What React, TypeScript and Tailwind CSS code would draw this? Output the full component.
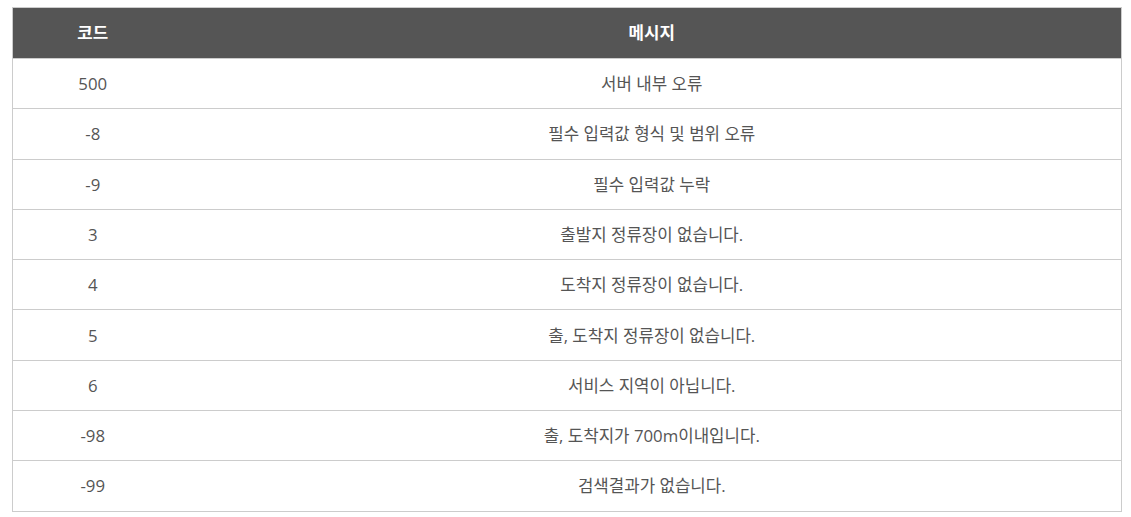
const rows = [
  ["500", "서버 내부 오류"],
  ["-8", "필수 입력값 형식 및 범위 오류"],
  ["-9", "필수 입력값 누락"],
  ["3", "출발지 정류장이 없습니다."],
  ["4", "도착지 정류장이 없습니다."],
  ["5", "출, 도착지 정류장이 없습니다."],
  ["6", "서비스 지역이 아닙니다."],
  ["-98", "출, 도착지가 700m이내입니다."],
  ["-99", "검색결과가 없습니다."],
];

export default function App() {
  return (
    <div className="min-h-[517px] bg-white pt-[7px] pl-[12px] pr-[9px]" style={{ fontFamily: '"Open Sans", "Noto Sans CJK KR", sans-serif' }}>
      <table className="w-[1110px] border-collapse border border-[#cccccc] text-[16.8px] text-[#555555]">
        <thead>
          <tr className="h-[51px] bg-[#555555] text-white">
            <th className="w-[160px] text-center font-bold">코드</th>
            <th className="pl-[10px] text-center font-bold">메시지</th>
          </tr>
        </thead>
        <tbody>
          {rows.map(([code, msg]) => (
            <tr key={code} className="h-[50.3px] border-t border-[#cccccc]">
              <td className="text-center">{code}</td>
              <td className="pl-[10px] text-center">{msg}</td>
            </tr>
          ))}
        </tbody>
      </table>
    </div>
  );
}
